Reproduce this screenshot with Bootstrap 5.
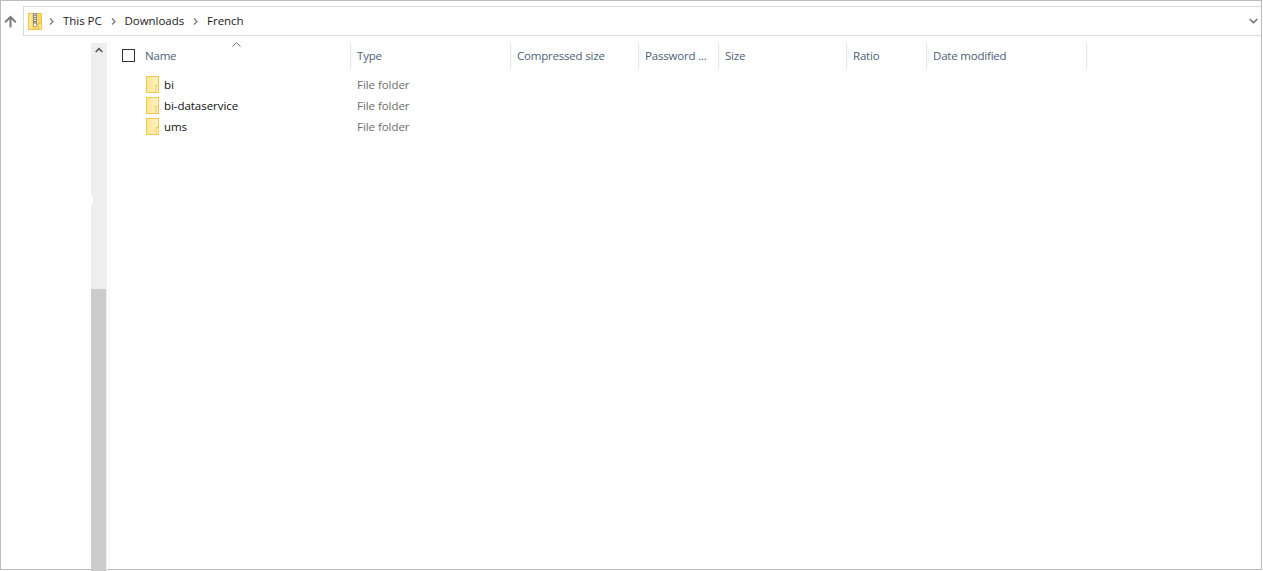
<!DOCTYPE html>
<html lang="en">
<head>
<meta charset="utf-8">
<title>French</title>
<link rel="stylesheet" href="https://cdn.jsdelivr.net/npm/bootstrap@5.3.0/dist/css/bootstrap.min.css">
<style>
html,body{height:100%;background:#fff;overflow:hidden}
body{font-family:"Open Sans","Noto Sans",sans-serif;font-size:11.5px;line-height:16px;color:#1a1a1a}
.shell{width:1262px;height:570px;border:1px solid #bcbcbc}
.toolbar{height:30px;margin-top:5px}
.up-btn{width:22px;padding-left:3px}
.addr{border:1px solid #d9d9d9;border-right:0;height:30px;padding-left:4px;padding-right:3px;color:#1a1a1a;letter-spacing:-.05px}
.crumb-sep{margin:0 9px}
.crumb-first{margin:0 9px 0 7px}
.nav-pane{width:90px}
.vscroll{width:16px;background:#eee;margin-top:7px;margin-bottom:-2px;position:relative}
.vscroll .thumb{position:absolute;left:0;right:1px;top:246px;bottom:0;background:#ccc}
.vscroll .arrow{position:absolute;left:4px;top:4px}
.vscroll .notch{position:absolute;left:0;top:153px;width:2px;height:8px;background:#fff}
.pane-line{width:1px;background:#f5f5f5;margin-left:2px;margin-top:7px}
.listing{padding-top:7px;margin-left:-3px}
.cols{display:grid;grid-template-columns:244px 160px 128px 80px 128px 80px 160px}
.head{height:26px;margin-bottom:5px;position:relative;color:#4c607a;letter-spacing:-.2px}
.head>div{border-right:1px solid #e5e5e5;padding:5px 0 0 6px;white-space:nowrap}
.head>.name-col{padding-left:15px;display:flex;gap:10px}
.check{flex:none;display:block;width:13px;height:13px;border:1px solid #333;margin-top:1px}
.sort{position:absolute;left:125px;top:-1px}
.item{height:21px;align-items:center;letter-spacing:-.05px}
.item>div{padding-left:6px;color:#6d6d6d}
.item>.name-col{padding-left:39px;display:flex;align-items:center;gap:5px;color:#111}
</style>
</head>
<body>
<svg width="0" height="0" class="position-absolute">
  <defs>
    <linearGradient id="fold"><stop offset="0" stop-color="#fde68f"/><stop offset="1" stop-color="#fff2c4"/></linearGradient>
    <symbol id="folder" viewBox="0 0 13 17"><rect x=".5" y=".5" width="12" height="16" fill="url(#fold)" stroke="#edc94f"/><rect x="10" y="9.5" width="2.5" height="7" fill="#fff2c4" stroke="#edc94f"/></symbol>
  </defs>
</svg>
<div class="shell d-flex flex-column">
  <div class="toolbar d-flex">
    <div class="up-btn d-flex align-items-center">
      <svg width="13" height="13" viewBox="0 0 13 13"><path d="M6.5 12.5V2M1.2 7.2l5.3-5.3 5.3 5.3" fill="none" stroke="#7a7a7a" stroke-width="2"/></svg>
    </div>
    <div class="addr flex-grow-1 d-flex align-items-center">
      <svg width="14" height="17" viewBox="0 0 14 17"><rect x=".5" y=".5" width="13" height="16" fill="#fcd964" stroke="#e9c44e"/><rect x="1" y="1" width="3" height="15" fill="#fee592"/><rect x="5" y="0" width="4" height="11" fill="#8f8f8f"/><path d="M6 1.5h2M6 3.5h2M6 5.5h2M6 7.5h2" stroke="#e6e6e6"/><rect x="5.5" y="10" width="3" height="3.5" rx="1" fill="#fff" stroke="#8a8a8a"/><rect x="10.5" y="10.5" width="3" height="6" fill="#fee592" stroke="#e9c44e"/></svg>
      <svg class="crumb-first" width="5" height="7" viewBox="0 0 5 7"><path d="M1 0.5l3 3-3 3" fill="none" stroke="#777" stroke-width="1.3"/></svg>
      <span>This PC</span>
      <svg class="crumb-sep" width="5" height="7" viewBox="0 0 5 7"><path d="M1 0.5l3 3-3 3" fill="none" stroke="#777" stroke-width="1.3"/></svg>
      <span>Downloads</span>
      <svg class="crumb-sep" width="5" height="7" viewBox="0 0 5 7"><path d="M1 0.5l3 3-3 3" fill="none" stroke="#777" stroke-width="1.3"/></svg>
      <span>French</span>
      <svg class="ms-auto" width="9" height="6" viewBox="0 0 9 6"><path d="M.8 1l3.7 3.7L8.2 1" fill="none" stroke="#6e6e6e" stroke-width="1.6"/></svg>
    </div>
  </div>
  <div class="d-flex flex-grow-1">
    <div class="nav-pane flex-shrink-0"></div>
    <div class="vscroll flex-shrink-0">
      <svg class="arrow" width="8" height="6" viewBox="0 0 8 6"><path d="M.7 5L4 1.6 7.3 5" fill="none" stroke="#555" stroke-width="1.7"/></svg>
      <div class="notch"></div>
      <div class="thumb"></div>
    </div>
    <div class="pane-line flex-shrink-0"></div>
    <div class="listing flex-grow-1">
      <div class="cols head">
        <div class="name-col"><span class="check"></span><span>Name</span></div>
        <div>Type</div>
        <div>Compressed size</div>
        <div>Password ...</div>
        <div>Size</div>
        <div>Ratio</div>
        <div>Date modified</div>
        <svg class="sort" width="9" height="5" viewBox="0 0 9 5"><path d="M.5 4.5l4-4 4 4" fill="none" stroke="#777"/></svg>
      </div>
      <div class="cols item">
        <div class="name-col"><svg width="13" height="17"><use href="#folder"/></svg><span>bi</span></div>
        <div>File folder</div>
      </div>
      <div class="cols item">
        <div class="name-col"><svg width="13" height="17"><use href="#folder"/></svg><span>bi-dataservice</span></div>
        <div>File folder</div>
      </div>
      <div class="cols item">
        <div class="name-col"><svg width="13" height="17"><use href="#folder"/></svg><span>ums</span></div>
        <div>File folder</div>
      </div>
    </div>
  </div>
</div>
<script src="https://cdn.jsdelivr.net/npm/bootstrap@5.3.0/dist/js/bootstrap.bundle.min.js"></script>
</body>
</html>
